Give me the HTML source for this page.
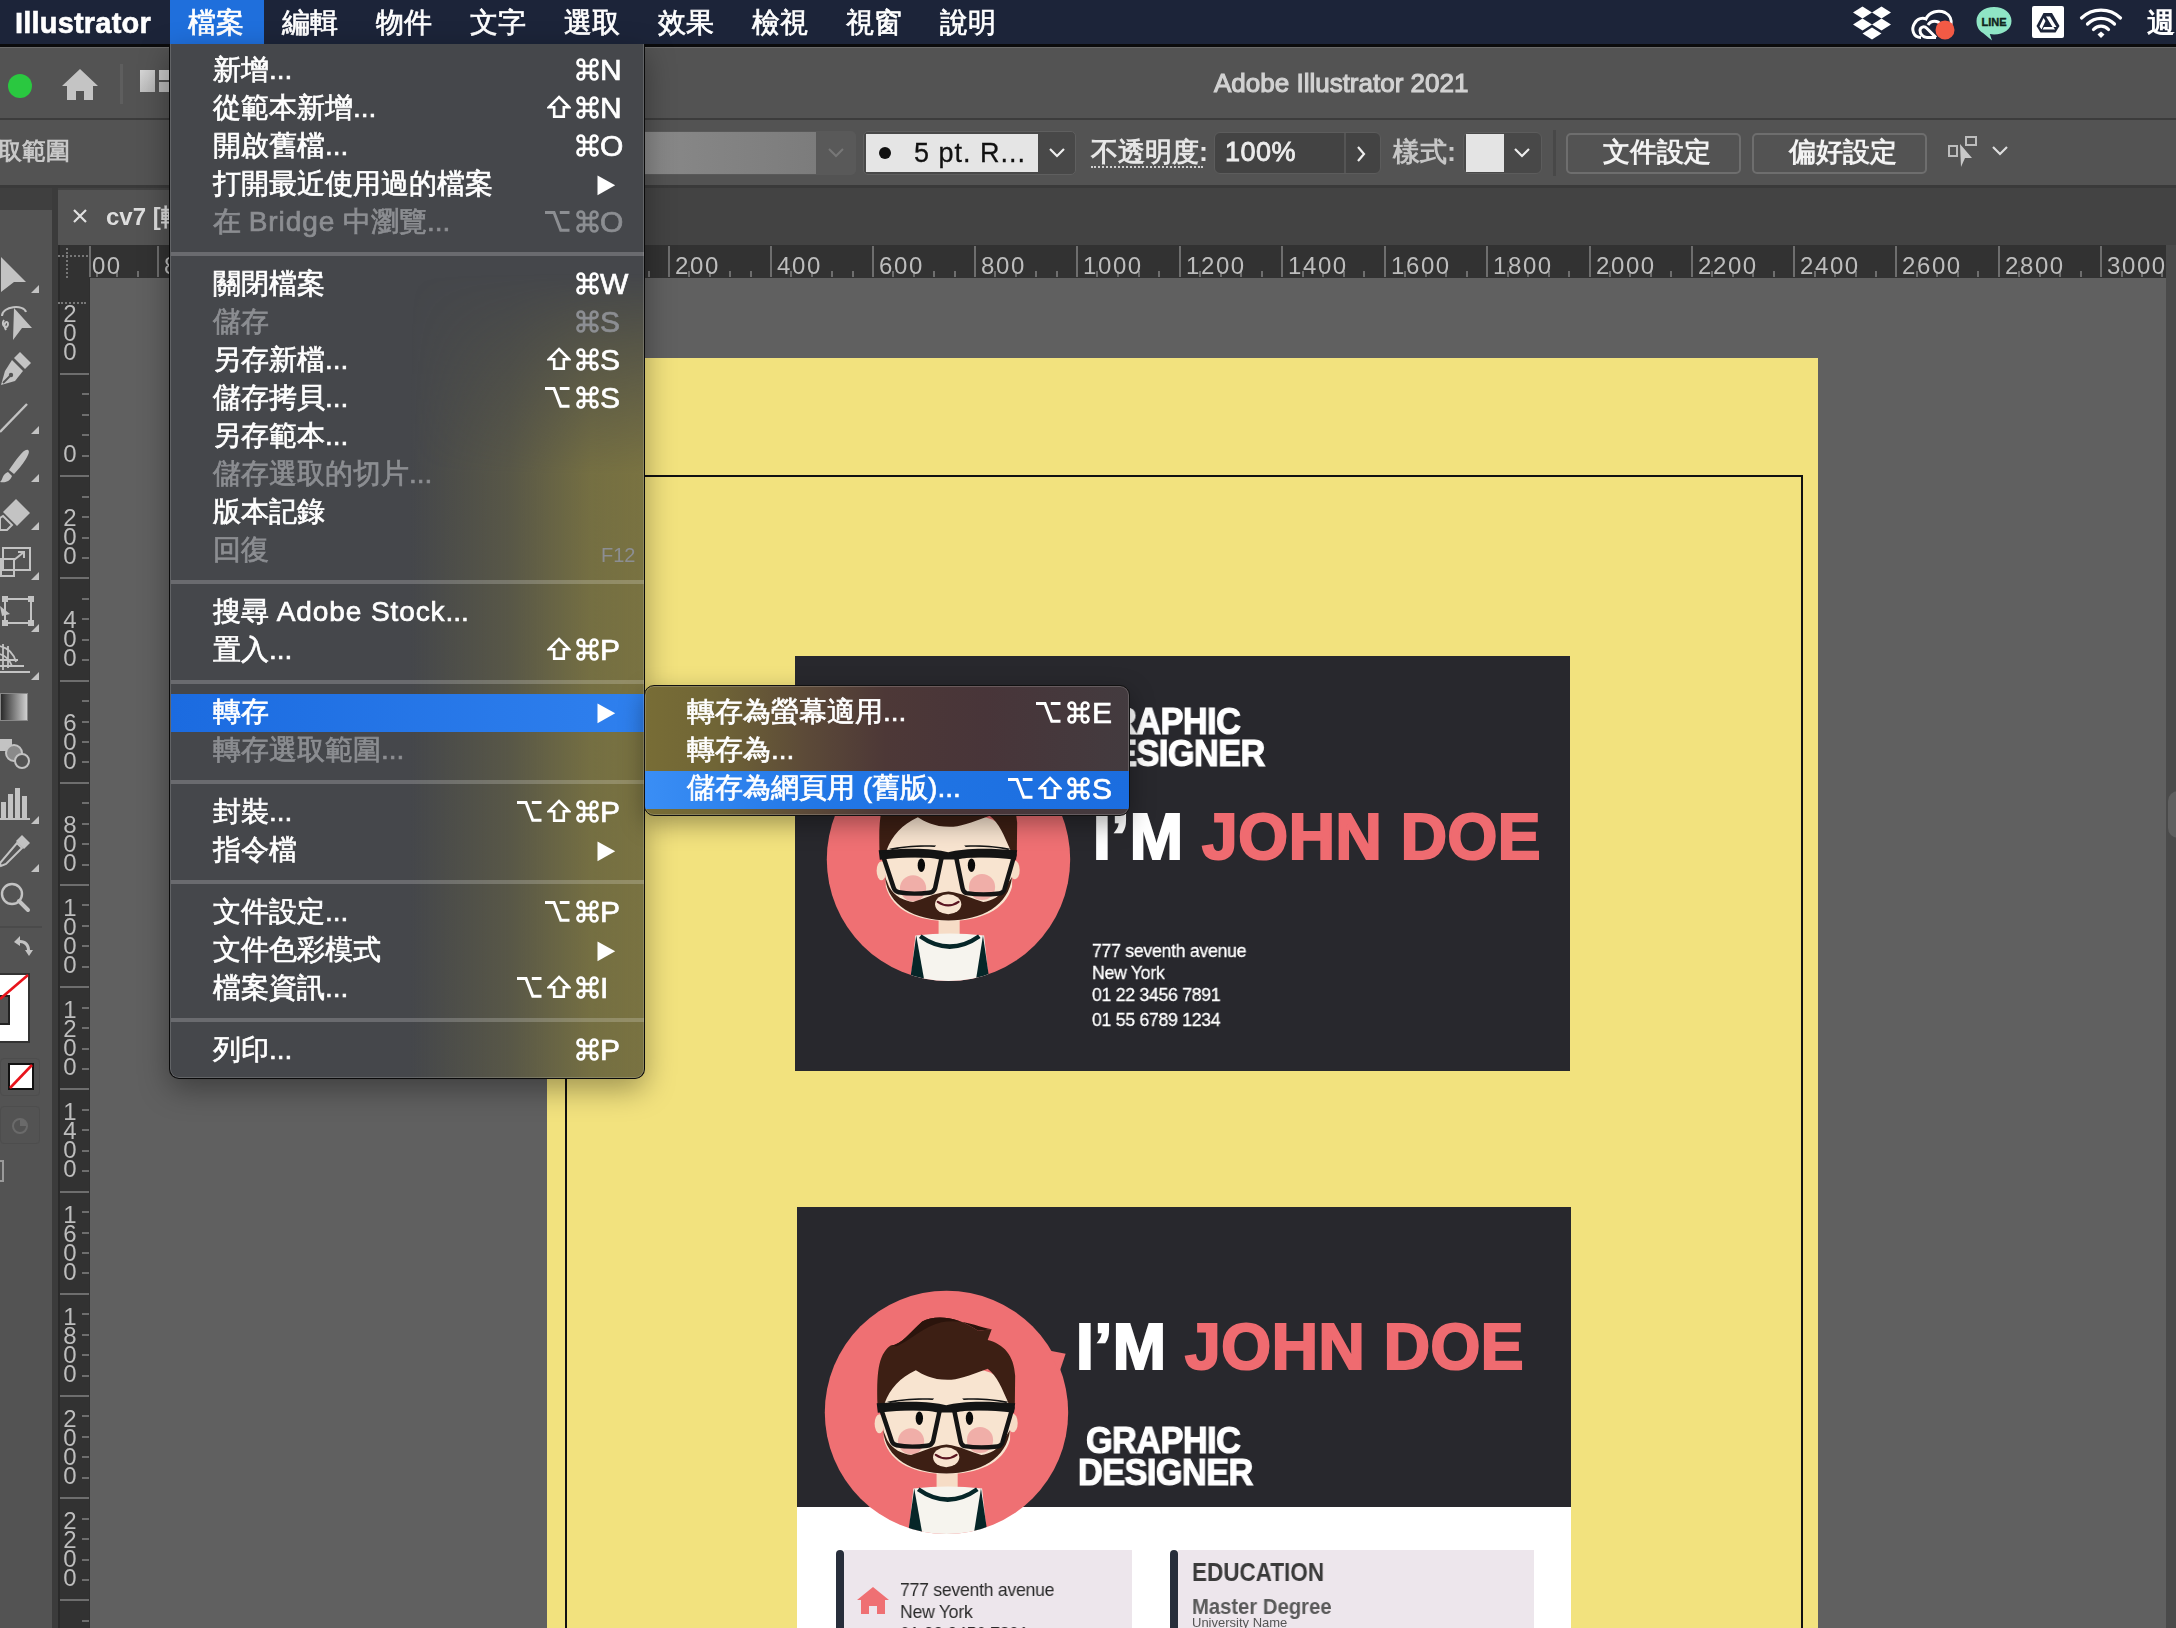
<!DOCTYPE html>
<html><head><meta charset="utf-8"><style>
*{margin:0;padding:0;box-sizing:border-box}
html,body{width:2176px;height:1628px;overflow:hidden;background:#606060;font-family:'Liberation Sans', sans-serif;}
.a{position:absolute}
.t{position:absolute;white-space:nowrap;line-height:1;will-change:transform}
.s{-webkit-text-stroke:0.7px currentColor}
.L{letter-spacing:0.9px}
</style></head>
<body>
<div class="a" style="left:0;top:0;width:2176px;height:44px;background:#1c2439"></div>
<div class="a" style="left:0;top:44px;width:2176px;height:3px;background:#0b0b0c"></div>
<div class="a" style="left:170px;top:0;width:94px;height:44px;background:#1f6fdc"></div>
<div class="t" style="left:15px;top:9px;font-size:29px;font-weight:bold;color:#fff;-webkit-text-stroke:0.6px #fff;letter-spacing:0.2px">Illustrator</div>
<div class="t s" style="left:188px;top:9px;font-size:28px;font-weight:500;color:#fff">檔案</div>
<div class="t s" style="left:282px;top:9px;font-size:28px;font-weight:500;color:#fff">編輯</div>
<div class="t s" style="left:376px;top:9px;font-size:28px;font-weight:500;color:#fff">物件</div>
<div class="t s" style="left:470px;top:9px;font-size:28px;font-weight:500;color:#fff">文字</div>
<div class="t s" style="left:564px;top:9px;font-size:28px;font-weight:500;color:#fff">選取</div>
<div class="t s" style="left:658px;top:9px;font-size:28px;font-weight:500;color:#fff">效果</div>
<div class="t s" style="left:752px;top:9px;font-size:28px;font-weight:500;color:#fff">檢視</div>
<div class="t s" style="left:846px;top:9px;font-size:28px;font-weight:500;color:#fff">視窗</div>
<div class="t s" style="left:940px;top:9px;font-size:28px;font-weight:500;color:#fff">說明</div>
<div class="a" style="left:0;top:47px;width:2176px;height:71px;background:#535353;border-top:1px solid #6a6a6a"></div>
<div class="a" style="left:0;top:118px;width:2176px;height:2px;background:#3c3c3c"></div>
<div class="a" style="left:8px;top:74px;width:24px;height:24px;border-radius:50%;background:#2ac840"></div>
<div class="t" style="left:1214px;top:70px;font-size:26px;font-weight:500;color:#d2d2d2;-webkit-text-stroke:1.1px #d2d2d2">Adobe Illustrator 2021</div>
<div class="a" style="left:0;top:120px;width:2176px;height:66px;background:#535353"></div>
<div class="a" style="left:0;top:185px;width:2176px;height:3px;background:#3a3a3a"></div>
<div class="t" style="left:-2px;top:139px;font-size:24px;font-weight:bold;color:#c8c8c8">取範圍</div>
<div class="a" style="left:0;top:188px;width:2176px;height:57px;background:#434343"></div>
<div class="a" style="left:0;top:188px;width:52px;height:1440px;background:#535353"></div>
<div class="a" style="left:0;top:188px;width:52px;height:22px;background:#3f3f3f"></div>
<div class="a" style="left:52px;top:188px;width:6px;height:1440px;background:#3b3b3b"></div>
<div class="a" style="left:58px;top:190px;width:580px;height:55px;background:#535353"></div>
<div class="a" style="left:58px;top:245px;width:2108px;height:33px;background:#323232"></div>
<div class="a" style="left:58px;top:245px;width:32px;height:1383px;background:#323232"></div>
<div class="a" style="left:2166px;top:245px;width:10px;height:1383px;background:#4a4a4a"></div>
<div class="a" style="left:2168px;top:791px;width:20px;height:47px;border-radius:10px;background:#5f5f5f"></div>
<div class="a" style="left:547px;top:358px;width:1271px;height:1270px;background:#f2e27e"></div>
<div class="a" style="left:565px;top:475px;width:1238px;height:1200px;border:2px solid #111"></div>
<div class="a" style="left:795px;top:656px;width:775px;height:415px;background:#28282d"></div>
<div class="a" style="left:797px;top:1207px;width:774px;height:300px;background:#28282d"></div>
<div class="a" style="left:797px;top:1507px;width:774px;height:121px;background:#fff"></div>
<div class="a" style="left:95.7px;top:271px;width:2px;height:6px;background:#6e6e6e"></div>
<div class="a" style="left:116.1px;top:271px;width:2px;height:6px;background:#6e6e6e"></div>
<div class="a" style="left:136.6px;top:271px;width:2px;height:6px;background:#6e6e6e"></div>
<div class="t" style="left:61.799999999999955px;top:254px;font-size:24px;color:#bdbdbd;letter-spacing:1.6px">1000</div>
<div class="a" style="left:157.0px;top:246px;width:2px;height:31px;background:#6e6e6e"></div>
<div class="a" style="left:177.4px;top:271px;width:2px;height:6px;background:#6e6e6e"></div>
<div class="a" style="left:197.9px;top:271px;width:2px;height:6px;background:#6e6e6e"></div>
<div class="a" style="left:218.3px;top:271px;width:2px;height:6px;background:#6e6e6e"></div>
<div class="a" style="left:238.8px;top:271px;width:2px;height:6px;background:#6e6e6e"></div>
<div class="t" style="left:164.0px;top:254px;font-size:24px;color:#bdbdbd;letter-spacing:1.6px">800</div>
<div class="a" style="left:259.2px;top:246px;width:2px;height:31px;background:#6e6e6e"></div>
<div class="a" style="left:279.6px;top:271px;width:2px;height:6px;background:#6e6e6e"></div>
<div class="a" style="left:300.1px;top:271px;width:2px;height:6px;background:#6e6e6e"></div>
<div class="a" style="left:320.5px;top:271px;width:2px;height:6px;background:#6e6e6e"></div>
<div class="a" style="left:341.0px;top:271px;width:2px;height:6px;background:#6e6e6e"></div>
<div class="t" style="left:266.2px;top:254px;font-size:24px;color:#bdbdbd;letter-spacing:1.6px">600</div>
<div class="a" style="left:361.4px;top:246px;width:2px;height:31px;background:#6e6e6e"></div>
<div class="a" style="left:381.8px;top:271px;width:2px;height:6px;background:#6e6e6e"></div>
<div class="a" style="left:402.3px;top:271px;width:2px;height:6px;background:#6e6e6e"></div>
<div class="a" style="left:422.7px;top:271px;width:2px;height:6px;background:#6e6e6e"></div>
<div class="a" style="left:443.2px;top:271px;width:2px;height:6px;background:#6e6e6e"></div>
<div class="t" style="left:368.4px;top:254px;font-size:24px;color:#bdbdbd;letter-spacing:1.6px">400</div>
<div class="a" style="left:463.6px;top:246px;width:2px;height:31px;background:#6e6e6e"></div>
<div class="a" style="left:484.0px;top:271px;width:2px;height:6px;background:#6e6e6e"></div>
<div class="a" style="left:504.5px;top:271px;width:2px;height:6px;background:#6e6e6e"></div>
<div class="a" style="left:524.9px;top:271px;width:2px;height:6px;background:#6e6e6e"></div>
<div class="a" style="left:545.4px;top:271px;width:2px;height:6px;background:#6e6e6e"></div>
<div class="t" style="left:470.6px;top:254px;font-size:24px;color:#bdbdbd;letter-spacing:1.6px">200</div>
<div class="a" style="left:565.8px;top:246px;width:2px;height:31px;background:#6e6e6e"></div>
<div class="a" style="left:586.2px;top:271px;width:2px;height:6px;background:#6e6e6e"></div>
<div class="a" style="left:606.7px;top:271px;width:2px;height:6px;background:#6e6e6e"></div>
<div class="a" style="left:627.1px;top:271px;width:2px;height:6px;background:#6e6e6e"></div>
<div class="a" style="left:647.6px;top:271px;width:2px;height:6px;background:#6e6e6e"></div>
<div class="t" style="left:572.8px;top:254px;font-size:24px;color:#bdbdbd;letter-spacing:1.6px">0</div>
<div class="a" style="left:668.0px;top:246px;width:2px;height:31px;background:#6e6e6e"></div>
<div class="a" style="left:688.4px;top:271px;width:2px;height:6px;background:#6e6e6e"></div>
<div class="a" style="left:708.8px;top:271px;width:2px;height:6px;background:#6e6e6e"></div>
<div class="a" style="left:729.2px;top:271px;width:2px;height:6px;background:#6e6e6e"></div>
<div class="a" style="left:749.6px;top:271px;width:2px;height:6px;background:#6e6e6e"></div>
<div class="t" style="left:675.0px;top:254px;font-size:24px;color:#bdbdbd;letter-spacing:1.6px">200</div>
<div class="a" style="left:770.0px;top:246px;width:2px;height:31px;background:#6e6e6e"></div>
<div class="a" style="left:790.4px;top:271px;width:2px;height:6px;background:#6e6e6e"></div>
<div class="a" style="left:810.8px;top:271px;width:2px;height:6px;background:#6e6e6e"></div>
<div class="a" style="left:831.2px;top:271px;width:2px;height:6px;background:#6e6e6e"></div>
<div class="a" style="left:851.6px;top:271px;width:2px;height:6px;background:#6e6e6e"></div>
<div class="t" style="left:776.975px;top:254px;font-size:24px;color:#bdbdbd;letter-spacing:1.6px">400</div>
<div class="a" style="left:872.0px;top:246px;width:2px;height:31px;background:#6e6e6e"></div>
<div class="a" style="left:892.3px;top:271px;width:2px;height:6px;background:#6e6e6e"></div>
<div class="a" style="left:912.7px;top:271px;width:2px;height:6px;background:#6e6e6e"></div>
<div class="a" style="left:933.1px;top:271px;width:2px;height:6px;background:#6e6e6e"></div>
<div class="a" style="left:953.5px;top:271px;width:2px;height:6px;background:#6e6e6e"></div>
<div class="t" style="left:878.95px;top:254px;font-size:24px;color:#bdbdbd;letter-spacing:1.6px">600</div>
<div class="a" style="left:973.9px;top:246px;width:2px;height:31px;background:#6e6e6e"></div>
<div class="a" style="left:994.3px;top:271px;width:2px;height:6px;background:#6e6e6e"></div>
<div class="a" style="left:1014.7px;top:271px;width:2px;height:6px;background:#6e6e6e"></div>
<div class="a" style="left:1035.1px;top:271px;width:2px;height:6px;background:#6e6e6e"></div>
<div class="a" style="left:1055.5px;top:271px;width:2px;height:6px;background:#6e6e6e"></div>
<div class="t" style="left:980.9250000000001px;top:254px;font-size:24px;color:#bdbdbd;letter-spacing:1.6px">800</div>
<div class="a" style="left:1075.9px;top:246px;width:2px;height:31px;background:#6e6e6e"></div>
<div class="a" style="left:1096.4px;top:271px;width:2px;height:6px;background:#6e6e6e"></div>
<div class="a" style="left:1117.0px;top:271px;width:2px;height:6px;background:#6e6e6e"></div>
<div class="a" style="left:1137.5px;top:271px;width:2px;height:6px;background:#6e6e6e"></div>
<div class="a" style="left:1158.0px;top:271px;width:2px;height:6px;background:#6e6e6e"></div>
<div class="t" style="left:1082.9px;top:254px;font-size:24px;color:#bdbdbd;letter-spacing:1.6px">1000</div>
<div class="a" style="left:1178.6px;top:246px;width:2px;height:31px;background:#6e6e6e"></div>
<div class="a" style="left:1199.1px;top:271px;width:2px;height:6px;background:#6e6e6e"></div>
<div class="a" style="left:1219.6px;top:271px;width:2px;height:6px;background:#6e6e6e"></div>
<div class="a" style="left:1240.2px;top:271px;width:2px;height:6px;background:#6e6e6e"></div>
<div class="a" style="left:1260.7px;top:271px;width:2px;height:6px;background:#6e6e6e"></div>
<div class="t" style="left:1185.5666666666668px;top:254px;font-size:24px;color:#bdbdbd;letter-spacing:1.6px">1200</div>
<div class="a" style="left:1281.2px;top:246px;width:2px;height:31px;background:#6e6e6e"></div>
<div class="a" style="left:1301.8px;top:271px;width:2px;height:6px;background:#6e6e6e"></div>
<div class="a" style="left:1322.3px;top:271px;width:2px;height:6px;background:#6e6e6e"></div>
<div class="a" style="left:1342.8px;top:271px;width:2px;height:6px;background:#6e6e6e"></div>
<div class="a" style="left:1363.4px;top:271px;width:2px;height:6px;background:#6e6e6e"></div>
<div class="t" style="left:1288.2333333333333px;top:254px;font-size:24px;color:#bdbdbd;letter-spacing:1.6px">1400</div>
<div class="a" style="left:1383.9px;top:246px;width:2px;height:31px;background:#6e6e6e"></div>
<div class="a" style="left:1404.4px;top:271px;width:2px;height:6px;background:#6e6e6e"></div>
<div class="a" style="left:1424.8px;top:271px;width:2px;height:6px;background:#6e6e6e"></div>
<div class="a" style="left:1445.3px;top:271px;width:2px;height:6px;background:#6e6e6e"></div>
<div class="a" style="left:1465.7px;top:271px;width:2px;height:6px;background:#6e6e6e"></div>
<div class="t" style="left:1390.9px;top:254px;font-size:24px;color:#bdbdbd;letter-spacing:1.6px">1600</div>
<div class="a" style="left:1486.2px;top:246px;width:2px;height:31px;background:#6e6e6e"></div>
<div class="a" style="left:1506.7px;top:271px;width:2px;height:6px;background:#6e6e6e"></div>
<div class="a" style="left:1527.1px;top:271px;width:2px;height:6px;background:#6e6e6e"></div>
<div class="a" style="left:1547.6px;top:271px;width:2px;height:6px;background:#6e6e6e"></div>
<div class="a" style="left:1568.0px;top:271px;width:2px;height:6px;background:#6e6e6e"></div>
<div class="t" style="left:1493.2px;top:254px;font-size:24px;color:#bdbdbd;letter-spacing:1.6px">1800</div>
<div class="a" style="left:1588.5px;top:246px;width:2px;height:31px;background:#6e6e6e"></div>
<div class="a" style="left:1609.0px;top:271px;width:2px;height:6px;background:#6e6e6e"></div>
<div class="a" style="left:1629.4px;top:271px;width:2px;height:6px;background:#6e6e6e"></div>
<div class="a" style="left:1649.9px;top:271px;width:2px;height:6px;background:#6e6e6e"></div>
<div class="a" style="left:1670.3px;top:271px;width:2px;height:6px;background:#6e6e6e"></div>
<div class="t" style="left:1595.5px;top:254px;font-size:24px;color:#bdbdbd;letter-spacing:1.6px">2000</div>
<div class="a" style="left:1690.8px;top:246px;width:2px;height:31px;background:#6e6e6e"></div>
<div class="a" style="left:1711.3px;top:271px;width:2px;height:6px;background:#6e6e6e"></div>
<div class="a" style="left:1731.7px;top:271px;width:2px;height:6px;background:#6e6e6e"></div>
<div class="a" style="left:1752.2px;top:271px;width:2px;height:6px;background:#6e6e6e"></div>
<div class="a" style="left:1772.6px;top:271px;width:2px;height:6px;background:#6e6e6e"></div>
<div class="t" style="left:1697.8000000000002px;top:254px;font-size:24px;color:#bdbdbd;letter-spacing:1.6px">2200</div>
<div class="a" style="left:1793.1px;top:246px;width:2px;height:31px;background:#6e6e6e"></div>
<div class="a" style="left:1813.6px;top:271px;width:2px;height:6px;background:#6e6e6e"></div>
<div class="a" style="left:1834.0px;top:271px;width:2px;height:6px;background:#6e6e6e"></div>
<div class="a" style="left:1854.5px;top:271px;width:2px;height:6px;background:#6e6e6e"></div>
<div class="a" style="left:1874.9px;top:271px;width:2px;height:6px;background:#6e6e6e"></div>
<div class="t" style="left:1800.1000000000001px;top:254px;font-size:24px;color:#bdbdbd;letter-spacing:1.6px">2400</div>
<div class="a" style="left:1895.4px;top:246px;width:2px;height:31px;background:#6e6e6e"></div>
<div class="a" style="left:1915.9px;top:271px;width:2px;height:6px;background:#6e6e6e"></div>
<div class="a" style="left:1936.3px;top:271px;width:2px;height:6px;background:#6e6e6e"></div>
<div class="a" style="left:1956.8px;top:271px;width:2px;height:6px;background:#6e6e6e"></div>
<div class="a" style="left:1977.2px;top:271px;width:2px;height:6px;background:#6e6e6e"></div>
<div class="t" style="left:1902.4px;top:254px;font-size:24px;color:#bdbdbd;letter-spacing:1.6px">2600</div>
<div class="a" style="left:1997.7px;top:246px;width:2px;height:31px;background:#6e6e6e"></div>
<div class="a" style="left:2018.2px;top:271px;width:2px;height:6px;background:#6e6e6e"></div>
<div class="a" style="left:2038.6px;top:271px;width:2px;height:6px;background:#6e6e6e"></div>
<div class="a" style="left:2059.1px;top:271px;width:2px;height:6px;background:#6e6e6e"></div>
<div class="a" style="left:2079.5px;top:271px;width:2px;height:6px;background:#6e6e6e"></div>
<div class="t" style="left:2004.7px;top:254px;font-size:24px;color:#bdbdbd;letter-spacing:1.6px">2800</div>
<div class="a" style="left:2100.0px;top:246px;width:2px;height:31px;background:#6e6e6e"></div>
<div class="a" style="left:2120.5px;top:271px;width:2px;height:6px;background:#6e6e6e"></div>
<div class="a" style="left:2140.9px;top:271px;width:2px;height:6px;background:#6e6e6e"></div>
<div class="a" style="left:2161.4px;top:271px;width:2px;height:6px;background:#6e6e6e"></div>
<div class="t" style="left:2107.0px;top:254px;font-size:24px;color:#bdbdbd;letter-spacing:1.6px">3000</div>
<div class="a" style="left:58px;top:373.0px;width:31px;height:2px;background:#6e6e6e"></div>
<div class="a" style="left:82px;top:393.4px;width:7px;height:2px;background:#6e6e6e"></div>
<div class="a" style="left:82px;top:413.9px;width:7px;height:2px;background:#6e6e6e"></div>
<div class="a" style="left:82px;top:434.3px;width:7px;height:2px;background:#6e6e6e"></div>
<div class="a" style="left:82px;top:454.8px;width:7px;height:2px;background:#6e6e6e"></div>
<div class="a" style="left:58px;top:475.2px;width:31px;height:2px;background:#6e6e6e"></div>
<div class="a" style="left:82px;top:495.6px;width:7px;height:2px;background:#6e6e6e"></div>
<div class="a" style="left:82px;top:516.1px;width:7px;height:2px;background:#6e6e6e"></div>
<div class="a" style="left:82px;top:536.5px;width:7px;height:2px;background:#6e6e6e"></div>
<div class="a" style="left:82px;top:557.0px;width:7px;height:2px;background:#6e6e6e"></div>
<div class="a" style="left:58px;top:577.4px;width:31px;height:2px;background:#6e6e6e"></div>
<div class="a" style="left:82px;top:597.8px;width:7px;height:2px;background:#6e6e6e"></div>
<div class="a" style="left:82px;top:618.3px;width:7px;height:2px;background:#6e6e6e"></div>
<div class="a" style="left:82px;top:638.7px;width:7px;height:2px;background:#6e6e6e"></div>
<div class="a" style="left:82px;top:659.2px;width:7px;height:2px;background:#6e6e6e"></div>
<div class="a" style="left:58px;top:679.6px;width:31px;height:2px;background:#6e6e6e"></div>
<div class="a" style="left:82px;top:700.0px;width:7px;height:2px;background:#6e6e6e"></div>
<div class="a" style="left:82px;top:720.5px;width:7px;height:2px;background:#6e6e6e"></div>
<div class="a" style="left:82px;top:740.9px;width:7px;height:2px;background:#6e6e6e"></div>
<div class="a" style="left:82px;top:761.4px;width:7px;height:2px;background:#6e6e6e"></div>
<div class="a" style="left:58px;top:781.8px;width:31px;height:2px;background:#6e6e6e"></div>
<div class="a" style="left:82px;top:802.2px;width:7px;height:2px;background:#6e6e6e"></div>
<div class="a" style="left:82px;top:822.7px;width:7px;height:2px;background:#6e6e6e"></div>
<div class="a" style="left:82px;top:843.1px;width:7px;height:2px;background:#6e6e6e"></div>
<div class="a" style="left:82px;top:863.6px;width:7px;height:2px;background:#6e6e6e"></div>
<div class="a" style="left:58px;top:884.0px;width:31px;height:2px;background:#6e6e6e"></div>
<div class="a" style="left:82px;top:904.4px;width:7px;height:2px;background:#6e6e6e"></div>
<div class="a" style="left:82px;top:924.9px;width:7px;height:2px;background:#6e6e6e"></div>
<div class="a" style="left:82px;top:945.3px;width:7px;height:2px;background:#6e6e6e"></div>
<div class="a" style="left:82px;top:965.8px;width:7px;height:2px;background:#6e6e6e"></div>
<div class="a" style="left:58px;top:986.2px;width:31px;height:2px;background:#6e6e6e"></div>
<div class="a" style="left:82px;top:1006.6px;width:7px;height:2px;background:#6e6e6e"></div>
<div class="a" style="left:82px;top:1027.1px;width:7px;height:2px;background:#6e6e6e"></div>
<div class="a" style="left:82px;top:1047.5px;width:7px;height:2px;background:#6e6e6e"></div>
<div class="a" style="left:82px;top:1068.0px;width:7px;height:2px;background:#6e6e6e"></div>
<div class="a" style="left:58px;top:1088.4px;width:31px;height:2px;background:#6e6e6e"></div>
<div class="a" style="left:82px;top:1108.8px;width:7px;height:2px;background:#6e6e6e"></div>
<div class="a" style="left:82px;top:1129.3px;width:7px;height:2px;background:#6e6e6e"></div>
<div class="a" style="left:82px;top:1149.7px;width:7px;height:2px;background:#6e6e6e"></div>
<div class="a" style="left:82px;top:1170.2px;width:7px;height:2px;background:#6e6e6e"></div>
<div class="a" style="left:58px;top:1190.6px;width:31px;height:2px;background:#6e6e6e"></div>
<div class="a" style="left:82px;top:1211.0px;width:7px;height:2px;background:#6e6e6e"></div>
<div class="a" style="left:82px;top:1231.5px;width:7px;height:2px;background:#6e6e6e"></div>
<div class="a" style="left:82px;top:1251.9px;width:7px;height:2px;background:#6e6e6e"></div>
<div class="a" style="left:82px;top:1272.4px;width:7px;height:2px;background:#6e6e6e"></div>
<div class="a" style="left:58px;top:1292.8px;width:31px;height:2px;background:#6e6e6e"></div>
<div class="a" style="left:82px;top:1313.2px;width:7px;height:2px;background:#6e6e6e"></div>
<div class="a" style="left:82px;top:1333.7px;width:7px;height:2px;background:#6e6e6e"></div>
<div class="a" style="left:82px;top:1354.1px;width:7px;height:2px;background:#6e6e6e"></div>
<div class="a" style="left:82px;top:1374.6px;width:7px;height:2px;background:#6e6e6e"></div>
<div class="a" style="left:58px;top:1395.0px;width:31px;height:2px;background:#6e6e6e"></div>
<div class="a" style="left:82px;top:1415.4px;width:7px;height:2px;background:#6e6e6e"></div>
<div class="a" style="left:82px;top:1435.9px;width:7px;height:2px;background:#6e6e6e"></div>
<div class="a" style="left:82px;top:1456.3px;width:7px;height:2px;background:#6e6e6e"></div>
<div class="a" style="left:82px;top:1476.8px;width:7px;height:2px;background:#6e6e6e"></div>
<div class="a" style="left:58px;top:1497.2px;width:31px;height:2px;background:#6e6e6e"></div>
<div class="a" style="left:82px;top:1517.6px;width:7px;height:2px;background:#6e6e6e"></div>
<div class="a" style="left:82px;top:1538.1px;width:7px;height:2px;background:#6e6e6e"></div>
<div class="a" style="left:82px;top:1558.5px;width:7px;height:2px;background:#6e6e6e"></div>
<div class="a" style="left:82px;top:1579.0px;width:7px;height:2px;background:#6e6e6e"></div>
<div class="a" style="left:58px;top:1599.4px;width:31px;height:2px;background:#6e6e6e"></div>
<div class="a" style="left:82px;top:1619.8px;width:7px;height:2px;background:#6e6e6e"></div>
<div class="a" style="left:82px;top:1640.3px;width:7px;height:2px;background:#6e6e6e"></div>
<div class="a" style="left:82px;top:1660.7px;width:7px;height:2px;background:#6e6e6e"></div>
<div class="a" style="left:82px;top:1681.2px;width:7px;height:2px;background:#6e6e6e"></div>
<div class="a" style="left:58px;top:1701.6px;width:31px;height:2px;background:#6e6e6e"></div>
<div class="a" style="left:82px;top:1722.0px;width:7px;height:2px;background:#6e6e6e"></div>
<div class="a" style="left:82px;top:1742.5px;width:7px;height:2px;background:#6e6e6e"></div>
<div class="a" style="left:82px;top:1762.9px;width:7px;height:2px;background:#6e6e6e"></div>
<div class="a" style="left:82px;top:1783.4px;width:7px;height:2px;background:#6e6e6e"></div>
<div class="t" style="left:62px;top:303.8px;font-size:24px;line-height:19px;color:#bdbdbd;width:16px;text-align:center">2<br>0<br>0</div>
<div class="t" style="left:62px;top:444.0px;font-size:24px;line-height:19px;color:#bdbdbd;width:16px;text-align:center">0</div>
<div class="t" style="left:62px;top:508.2px;font-size:24px;line-height:19px;color:#bdbdbd;width:16px;text-align:center">2<br>0<br>0</div>
<div class="t" style="left:62px;top:610.4px;font-size:24px;line-height:19px;color:#bdbdbd;width:16px;text-align:center">4<br>0<br>0</div>
<div class="t" style="left:62px;top:712.6px;font-size:24px;line-height:19px;color:#bdbdbd;width:16px;text-align:center">6<br>0<br>0</div>
<div class="t" style="left:62px;top:814.8px;font-size:24px;line-height:19px;color:#bdbdbd;width:16px;text-align:center">8<br>0<br>0</div>
<div class="t" style="left:62px;top:898.0px;font-size:24px;line-height:19px;color:#bdbdbd;width:16px;text-align:center">1<br>0<br>0<br>0</div>
<div class="t" style="left:62px;top:1000.2px;font-size:24px;line-height:19px;color:#bdbdbd;width:16px;text-align:center">1<br>2<br>0<br>0</div>
<div class="t" style="left:62px;top:1102.4px;font-size:24px;line-height:19px;color:#bdbdbd;width:16px;text-align:center">1<br>4<br>0<br>0</div>
<div class="t" style="left:62px;top:1204.6px;font-size:24px;line-height:19px;color:#bdbdbd;width:16px;text-align:center">1<br>6<br>0<br>0</div>
<div class="t" style="left:62px;top:1306.8px;font-size:24px;line-height:19px;color:#bdbdbd;width:16px;text-align:center">1<br>8<br>0<br>0</div>
<div class="t" style="left:62px;top:1409.0px;font-size:24px;line-height:19px;color:#bdbdbd;width:16px;text-align:center">2<br>0<br>0<br>0</div>
<div class="t" style="left:62px;top:1511.2px;font-size:24px;line-height:19px;color:#bdbdbd;width:16px;text-align:center">2<br>2<br>0<br>0</div>
<div class="a" style="left:58px;top:245px;width:31px;height:33px;background:#323232"></div>
<div class="a" style="left:89px;top:246px;width:2px;height:31px;background:#6e6e6e"></div>
<div class="a" style="left:58px;top:245px;width:2px;height:1383px;background:#2a2a2a"></div>
<div class="a" style="left:89px;top:278px;width:1px;height:1350px;background:#2f2f2f"></div>
<div class="a" style="left:66px;top:248px;width:0;height:30px;border-left:2px dotted #777"></div>
<div class="a" style="left:58px;top:255px;width:30px;height:0;border-top:2px dotted #777"></div>
<div class="a" style="left:58px;top:302px;width:28px;height:0;border-top:2px dotted #777"></div>
<svg class="a" style="left:822px;top:727px" width="260" height="260" viewBox="0 0 1628 1628">
<defs><clipPath id="cc727"><circle cx="792" cy="829" r="762"/></clipPath></defs>
<circle cx="792" cy="829" r="762" fill="#ef7073"/>

<g clip-path="url(#cc727)">
<path d="M730 1180 H862 V1330 H730 Z" fill="#f6dcc6"/>
<path d="M585 1305 Q800 1280 1015 1305 L1050 1640 L550 1640 Z" fill="#f6f4ee"/>
<path d="M590 1305 L555 1560 L560 1640 L650 1640 Z" fill="#062628"/>
<path d="M1008 1305 L1045 1560 L1040 1640 L955 1640 Z" fill="#062628"/>
<path d="M615 1310 Q800 1440 985 1310" fill="none" stroke="#062628" stroke-width="28"/>
</g>
<ellipse cx="372" cy="900" rx="30" ry="60" fill="#f6dcc6"/>
<ellipse cx="1208" cy="895" rx="30" ry="58" fill="#f6dcc6"/>
<path d="M390 760 C390 600 560 540 800 540 C1040 540 1195 600 1195 760 L1190 1000 C1150 1150 980 1215 792 1215 C600 1215 440 1150 400 1000 Z" fill="#f8e4d0"/>
<circle cx="570" cy="1010" r="82" fill="#f0aea8"/>
<circle cx="1002" cy="1002" r="82" fill="#f0aea8"/>
<path d="M360 780 C355 600 360 470 440 412 C520 400 560 330 640 260 C720 215 860 225 990 318 L1075 308 L1050 375 C1150 400 1215 470 1222 600 L1220 780 L1180 770 C1140 680 1110 600 1050 555 C930 600 860 625 800 625 C700 625 640 590 600 565 C500 610 440 680 405 770 Z" fill="#3d1f14"/>
<path d="M440 412 C520 400 560 330 640 260 C720 215 860 225 990 318 L1075 308 C1000 300 900 240 760 265 C650 290 580 370 480 415 Z" fill="#2b140c"/>
<path d="M395 940 C410 1120 580 1210 792 1212 C1000 1210 1170 1120 1190 940 L1150 1000 C1120 1060 1060 1090 1010 1095 C950 1080 880 1040 792 1030 C700 1040 630 1080 570 1095 C520 1090 450 1060 420 1000 Z" fill="#3d1f14"/>
<ellipse cx="790" cy="1110" rx="82" ry="62" fill="#f8e4d0"/>
<path d="M725 1095 Q790 1140 855 1095" fill="none" stroke="#5a1420" stroke-width="14" stroke-linecap="round"/>
<path d="M420 762 C500 745 620 735 715 742 L705 752 C620 748 520 752 440 770 Z" fill="#141414"/>
<path d="M890 742 C990 735 1100 745 1180 762 L1165 770 C1080 752 990 748 900 752 Z" fill="#141414"/>
<path d="M355 772 C560 755 700 760 790 785 C880 760 1020 755 1222 772 L1215 832 C1060 810 920 810 850 830 L735 830 C660 810 520 810 362 832 Z" fill="#141414"/>
<path d="M380 800 L752 805 L708 1010 Q700 1035 670 1038 Q560 1050 480 1035 Q455 1030 448 1005 Z" fill="none" stroke="#141414" stroke-width="28" stroke-linejoin="round"/>
<path d="M838 805 L1205 800 L1142 1018 Q1135 1040 1110 1042 Q1000 1055 905 1040 Q885 1035 880 1010 Z" fill="none" stroke="#141414" stroke-width="28" stroke-linejoin="round"/>
<ellipse cx="622" cy="866" rx="23" ry="42" fill="#0a0a0a"/>
<ellipse cx="936" cy="866" rx="23" ry="42" fill="#0a0a0a"/>
</svg>
<div class="t" style="left:1086px;top:704px;font-size:36px;font-weight:bold;color:#fff;-webkit-text-stroke:1.2px currentColor;transform:scaleX(.95);transform-origin:left top;letter-spacing:-0.5px">GRAPHIC</div>
<div class="t" style="left:1090px;top:736px;font-size:36px;font-weight:bold;color:#fff;-webkit-text-stroke:1.2px currentColor;transform:scaleX(.95);transform-origin:left top;letter-spacing:-0.5px">DESIGNER</div>
<div class="t" style="left:1093px;top:805px;font-size:64px;font-weight:bold;color:#fff;-webkit-text-stroke:2.2px currentColor;letter-spacing:0.6px">I’M <span style="color:#ef6b70">JOHN DOE</span></div>
<div class="t" style="left:1092px;top:941px;font-size:19px;font-weight:normal;color:#fff;letter-spacing:-0.3px;transform:scaleX(.93);transform-origin:left top;-webkit-text-stroke:0.3px #fff">777 seventh avenue</div>
<div class="t" style="left:1092px;top:963px;font-size:19px;font-weight:normal;color:#fff;letter-spacing:-0.3px;transform:scaleX(.93);transform-origin:left top;-webkit-text-stroke:0.3px #fff">New York</div>
<div class="t" style="left:1092px;top:985px;font-size:19px;font-weight:normal;color:#fff;letter-spacing:-0.3px;transform:scaleX(.93);transform-origin:left top;-webkit-text-stroke:0.3px #fff">01 22 3456 7891</div>
<div class="t" style="left:1092px;top:1010px;font-size:19px;font-weight:normal;color:#fff;letter-spacing:-0.3px;transform:scaleX(.93);transform-origin:left top;-webkit-text-stroke:0.3px #fff">01 55 6789 1234</div>
<svg class="a" style="left:820px;top:1280px" width="260" height="260" viewBox="0 0 1628 1628">
<defs><clipPath id="cc1280"><circle cx="792" cy="829" r="762"/></clipPath></defs>
<circle cx="792" cy="829" r="762" fill="#ef7073"/>
<path d="M1425 440 L1538 462 L1500 575 Z" fill="#ef7073"/>
<g clip-path="url(#cc1280)">
<path d="M730 1180 H862 V1330 H730 Z" fill="#f6dcc6"/>
<path d="M585 1305 Q800 1280 1015 1305 L1050 1640 L550 1640 Z" fill="#f6f4ee"/>
<path d="M590 1305 L555 1560 L560 1640 L650 1640 Z" fill="#062628"/>
<path d="M1008 1305 L1045 1560 L1040 1640 L955 1640 Z" fill="#062628"/>
<path d="M615 1310 Q800 1440 985 1310" fill="none" stroke="#062628" stroke-width="28"/>
</g>
<ellipse cx="372" cy="900" rx="30" ry="60" fill="#f6dcc6"/>
<ellipse cx="1208" cy="895" rx="30" ry="58" fill="#f6dcc6"/>
<path d="M390 760 C390 600 560 540 800 540 C1040 540 1195 600 1195 760 L1190 1000 C1150 1150 980 1215 792 1215 C600 1215 440 1150 400 1000 Z" fill="#f8e4d0"/>
<circle cx="570" cy="1010" r="82" fill="#f0aea8"/>
<circle cx="1002" cy="1002" r="82" fill="#f0aea8"/>
<path d="M360 780 C355 600 360 470 440 412 C520 400 560 330 640 260 C720 215 860 225 990 318 L1075 308 L1050 375 C1150 400 1215 470 1222 600 L1220 780 L1180 770 C1140 680 1110 600 1050 555 C930 600 860 625 800 625 C700 625 640 590 600 565 C500 610 440 680 405 770 Z" fill="#3d1f14"/>
<path d="M440 412 C520 400 560 330 640 260 C720 215 860 225 990 318 L1075 308 C1000 300 900 240 760 265 C650 290 580 370 480 415 Z" fill="#2b140c"/>
<path d="M395 940 C410 1120 580 1210 792 1212 C1000 1210 1170 1120 1190 940 L1150 1000 C1120 1060 1060 1090 1010 1095 C950 1080 880 1040 792 1030 C700 1040 630 1080 570 1095 C520 1090 450 1060 420 1000 Z" fill="#3d1f14"/>
<ellipse cx="790" cy="1110" rx="82" ry="62" fill="#f8e4d0"/>
<path d="M725 1095 Q790 1140 855 1095" fill="none" stroke="#5a1420" stroke-width="14" stroke-linecap="round"/>
<path d="M420 762 C500 745 620 735 715 742 L705 752 C620 748 520 752 440 770 Z" fill="#141414"/>
<path d="M890 742 C990 735 1100 745 1180 762 L1165 770 C1080 752 990 748 900 752 Z" fill="#141414"/>
<path d="M355 772 C560 755 700 760 790 785 C880 760 1020 755 1222 772 L1215 832 C1060 810 920 810 850 830 L735 830 C660 810 520 810 362 832 Z" fill="#141414"/>
<path d="M380 800 L752 805 L708 1010 Q700 1035 670 1038 Q560 1050 480 1035 Q455 1030 448 1005 Z" fill="none" stroke="#141414" stroke-width="28" stroke-linejoin="round"/>
<path d="M838 805 L1205 800 L1142 1018 Q1135 1040 1110 1042 Q1000 1055 905 1040 Q885 1035 880 1010 Z" fill="none" stroke="#141414" stroke-width="28" stroke-linejoin="round"/>
<ellipse cx="622" cy="866" rx="23" ry="42" fill="#0a0a0a"/>
<ellipse cx="936" cy="866" rx="23" ry="42" fill="#0a0a0a"/>
</svg>
<div class="t" style="left:1076px;top:1315px;font-size:64px;font-weight:bold;color:#fff;-webkit-text-stroke:2.2px currentColor;letter-spacing:0.6px">I’M <span style="color:#ef6b70">JOHN DOE</span></div>
<div class="t" style="left:1086px;top:1423px;font-size:36px;font-weight:bold;color:#fff;-webkit-text-stroke:1.2px currentColor;transform:scaleX(.95);transform-origin:left top;letter-spacing:-0.5px">GRAPHIC</div>
<div class="t" style="left:1078px;top:1455px;font-size:36px;font-weight:bold;color:#fff;-webkit-text-stroke:1.2px currentColor;transform:scaleX(.95);transform-origin:left top;letter-spacing:-0.5px">DESIGNER</div>
<div class="a" style="left:844px;top:1550px;width:288px;height:80px;background:#ede6ec"></div>
<div class="a" style="left:836px;top:1550px;width:8px;height:80px;border-radius:4px 4px 0 0;background:#272e3b"></div>
<div class="a" style="left:1178px;top:1550px;width:356px;height:80px;background:#ede6ec"></div>
<div class="a" style="left:1170px;top:1550px;width:8px;height:80px;border-radius:4px 4px 0 0;background:#272e3b"></div>
<svg class="a" style="left:856px;top:1585px" width="34" height="30" viewBox="0 0 34 30"><path d="M17 2 L33 15 L29 15 L29 29 L21 29 L21 21 L13 21 L13 29 L5 29 L5 15 L1 15 Z" fill="#ef7073"/></svg>
<div class="t" style="left:900px;top:1580px;font-size:19px;font-weight:normal;color:#2a2a2a;letter-spacing:-0.3px;transform:scaleX(.93);transform-origin:left top">777 seventh avenue</div>
<div class="t" style="left:900px;top:1624px;font-size:19px;font-weight:normal;color:#2a2a2a;letter-spacing:-0.3px;transform:scaleX(.93);transform-origin:left top">01 22 3456 7891</div>
<div class="t" style="left:900px;top:1602px;font-size:19px;font-weight:normal;color:#2a2a2a;letter-spacing:-0.3px;transform:scaleX(.93);transform-origin:left top">New York</div>
<div class="t" style="left:1192px;top:1560px;font-size:25px;font-weight:bold;color:#3b3b3b;transform:scaleX(.9);transform-origin:left top">EDUCATION</div>
<div class="t" style="left:1192px;top:1596px;font-size:22px;font-weight:bold;color:#5a5a5a;transform:scaleX(.92);transform-origin:left top">Master Degree</div>
<div class="t" style="left:1192px;top:1616px;font-size:13px;font-weight:normal;color:#555;">University Name</div>
<svg class="a" style="left:1850px;top:4px" width="44" height="38" viewBox="0 0 44 38">
<g fill="#fff">
<path d="M3 8.5 L12.5 2.5 L22 8.5 L12.5 14.5 Z"/><path d="M22 8.5 L31.5 2.5 L41 8.5 L31.5 14.5 Z"/>
<path d="M3 20.5 L12.5 14.5 L22 20.5 L12.5 26.5 Z"/><path d="M22 20.5 L31.5 14.5 L41 20.5 L31.5 26.5 Z"/>
<path d="M12.5 29.5 L22 23.5 L31.5 29.5 L22 35.5 Z"/></g></svg>
<svg class="a" style="left:1910px;top:8px" width="48" height="34" viewBox="0 0 48 34">
<path d="M11 29.5 C3 29.5 1 21 4.5 15.5 C7.5 10 13 9.5 16 11 C19 4 28 1.5 35 4.5 C40 7 42 12 41 17" fill="none" stroke="#fff" stroke-width="3"/>
<path d="M26 29.5 L17 20.5 C14 17.5 10 19 10 22.5 C10 26 13 29.5 17 29.5 L26 29.5" fill="none" stroke="#fff" stroke-width="3"/>
<path d="M18 17 C21 12 28 12 31 17" fill="none" stroke="#fff" stroke-width="3"/>
<circle cx="35" cy="22" r="9.5" fill="#f25a45"/></svg>
<svg class="a" style="left:1975px;top:5px" width="38" height="36" viewBox="0 0 38 36">
<path d="M19 2 C29 2 36.5 8 36.5 16 C36.5 24 29 29.5 19 29.5 C17.5 29.5 16 29.3 14.8 29 L17 35.5 L8 28 C3.5 25.5 1.5 21 1.5 16 C1.5 8 9 2 19 2 Z" fill="#8fe5c5"/>
<text x="19" y="21" text-anchor="middle" font-family="Liberation Sans" font-weight="bold" font-size="11" fill="#10231c" stroke="#10231c" stroke-width="0.4">LINE</text></svg>
<svg class="a" style="left:2031px;top:5px" width="34" height="34" viewBox="0 0 34 34">
<rect x="1" y="1" width="32" height="32" rx="2" fill="#fff"/>
<path d="M12.5 8 H21 L28.5 21 L24.5 27.5 H9.5 L5.5 21 Z" fill="#1c2439"/>
<path d="M15 11.5 L19 11.5 L25.5 22 L21.5 22 Z M12.5 13 L8.5 21.5 L10.5 24.5 L14.5 16 Z M11.5 24.5 H24 L22.5 22 H13 Z" fill="#fff"/></svg>
<svg class="a" style="left:2079px;top:6px" width="44" height="34" viewBox="0 0 44 34">
<path d="M2.5 12 A28 28 0 0 1 41.5 12" fill="none" stroke="#fff" stroke-width="3.2" stroke-linecap="round"/>
<path d="M8.5 18 A19 19 0 0 1 35.5 18" fill="none" stroke="#fff" stroke-width="3.2" stroke-linecap="round"/>
<path d="M14.5 23.5 A10 10 0 0 1 29.5 23.5" fill="none" stroke="#fff" stroke-width="3.2" stroke-linecap="round"/>
<path d="M18.5 28.5 L22 25.5 L25.5 28.5 L22 32 Z" fill="#fff"/></svg>
<div class="t" style="left:2147px;top:9px;font-size:28px;font-weight:700;color:#fff">週</div>
<svg class="a" style="left:60px;top:67px" width="40" height="36" viewBox="0 0 40 36">
<path d="M20 2 L38 19 L33 19 L33 33 L24 33 L24 24 L16 24 L16 33 L7 33 L7 19 L2 19 Z" fill="#c4c4c4"/></svg>
<div class="a" style="left:120px;top:64px;width:3px;height:40px;background:#5e5e5e"></div>
<div class="a" style="left:140px;top:70px;width:15px;height:22px;background:linear-gradient(135deg,#d6d6d6,#b2b2b2)"></div>
<div class="a" style="left:159px;top:70px;width:14px;height:10px;background:#c8c8c8"></div>
<div class="a" style="left:159px;top:82px;width:14px;height:10px;background:#b8b8b8"></div>
<div class="a" style="left:600px;top:131px;width:256px;height:44px;border-radius:5px;background:#595959"></div>
<div class="a" style="left:600px;top:132px;width:216px;height:42px;background:linear-gradient(90deg,#8c8c8c,#7c7c7c)"></div>
<svg class="a" style="left:826px;top:146px" width="20" height="14" viewBox="0 0 20 14"><path d="M3 3 L10 10 L17 3" fill="none" stroke="#777" stroke-width="2"/></svg>
<div class="a" style="left:863px;top:131px;width:213px;height:44px;border-radius:5px;background:#484848;border:1.5px solid #5f5f5f"></div>
<div class="a" style="left:866px;top:134px;width:172px;height:38px;background:#e5e5e5"></div>
<div class="a" style="left:879px;top:147px;width:12px;height:12px;border-radius:50%;background:#111"></div>
<div class="t" style="left:914px;top:140px;font-size:27px;font-weight:500;color:#111;-webkit-text-stroke:0.3px #111;letter-spacing:1px">5 pt. R...</div>
<svg class="a" style="left:1047px;top:146px" width="20" height="14" viewBox="0 0 20 14"><path d="M3 3 L10 10 L17 3" fill="none" stroke="#eee" stroke-width="2.2"/></svg>
<div class="t" style="left:1091px;top:139px;font-size:27px;font-weight:700;color:#e6e6e6">不透明度:</div>
<div class="a" style="left:1091px;top:166px;width:112px;height:0;border-top:2px dotted #cfcfcf"></div>
<div class="a" style="left:1214px;top:132px;width:167px;height:42px;border-radius:6px;background:#434343;border:1.5px solid #5c5c5c"></div>
<div class="a" style="left:1344px;top:133px;width:2px;height:40px;background:#555"></div>
<div class="t" style="left:1225px;top:139px;font-size:27px;font-weight:500;color:#ececec;-webkit-text-stroke:0.8px #ececec;letter-spacing:0.5px">100%</div>
<svg class="a" style="left:1354px;top:144px" width="14" height="20" viewBox="0 0 14 20"><path d="M4 3 L10 10 L4 17" fill="none" stroke="#eee" stroke-width="2.2"/></svg>
<div class="t" style="left:1393px;top:139px;font-size:27px;font-weight:700;color:#c6c6c6">樣式:</div>
<div class="a" style="left:1463px;top:132px;width:79px;height:42px;border-radius:6px;background:#484848;border:1.5px solid #5c5c5c"></div>
<div class="a" style="left:1466px;top:134px;width:38px;height:38px;background:#e4e4e4"></div>
<svg class="a" style="left:1512px;top:146px" width="20" height="14" viewBox="0 0 20 14"><path d="M3 3 L10 10 L17 3" fill="none" stroke="#eee" stroke-width="2.2"/></svg>
<div class="a" style="left:1553px;top:130px;width:3px;height:46px;background:#484848"></div>
<div class="a" style="left:1566px;top:133px;width:175px;height:41px;border-radius:5px;border:2px solid #6e6e6e"></div>
<div class="t" style="left:1603px;top:139px;font-size:27px;font-weight:700;color:#f2f2f2">文件設定</div>
<div class="a" style="left:1752px;top:133px;width:175px;height:41px;border-radius:5px;border:2px solid #6e6e6e"></div>
<div class="t" style="left:1789px;top:139px;font-size:27px;font-weight:700;color:#f2f2f2">偏好設定</div>
<svg class="a" style="left:1946px;top:134px" width="36" height="36" viewBox="0 0 36 36">
<rect x="3" y="12" width="8" height="10" fill="none" stroke="#bdbdbd" stroke-width="2"/>
<rect x="20" y="3" width="10" height="8" fill="none" stroke="#bdbdbd" stroke-width="2"/>
<path d="M14 10 L26 24 L19 24 L15 33 Z" fill="#c8c8c8"/></svg>
<svg class="a" style="left:1990px;top:144px" width="20" height="14" viewBox="0 0 20 14"><path d="M3 3 L10 10 L17 3" fill="none" stroke="#ddd" stroke-width="2.2"/></svg>
<svg class="a" style="left:72px;top:208px" width="16" height="16" viewBox="0 0 16 16"><path d="M2 2 L14 14 M14 2 L2 14" stroke="#e0e0e0" stroke-width="2.2"/></svg>
<div class="t" style="left:106px;top:205px;font-size:24px;font-weight:bold;color:#dedede">cv7 [轉</div>
<svg class="a" style="left:0;top:255px" width="30" height="38" viewBox="0 0 30 38"><path d="M1 2 L26 27 L14 27 L1 37 Z" fill="#c3c3c3"/></svg>
<svg class="a" style="left:31px;top:285px" width="8" height="8" viewBox="0 0 8 8"><path d="M8 0 L8 8 L0 8 Z" fill="#c3c3c3"/></svg>
<svg class="a" style="left:0;top:302px" width="36" height="40" viewBox="0 0 36 40">
<path d="M2 14 C2 4 24 2 26 10" fill="none" stroke="#c3c3c3" stroke-width="2"/>
<path d="M4 18 C0 24 8 28 8 22 C8 18 2 20 6 28" fill="none" stroke="#c3c3c3" stroke-width="2"/>
<path d="M14 6 L32 26 L22 26 L13 38 Z" fill="#c3c3c3"/></svg>
<svg class="a" style="left:0;top:348px" width="34" height="40" viewBox="0 0 34 40">
<path d="M20 4 L31 15 L25 21 L14 10 Z" fill="#c3c3c3"/><path d="M12 12 L23 23 L15 33 L1 37 L5 23 Z" fill="#c3c3c3"/>
<path d="M3 35 L10 28" stroke="#535353" stroke-width="2"/><circle cx="11" cy="27" r="2.2" fill="#535353"/></svg>
<svg class="a" style="left:0;top:400px" width="40" height="36" viewBox="0 0 40 36"><path d="M0 32 L27 4" stroke="#c3c3c3" stroke-width="2.4"/></svg>
<svg class="a" style="left:31px;top:426px" width="8" height="8" viewBox="0 0 8 8"><path d="M8 0 L8 8 L0 8 Z" fill="#c3c3c3"/></svg>
<svg class="a" style="left:0;top:448px" width="34" height="40" viewBox="0 0 34 40">
<path d="M28 2 C32 4 22 18 14 26 L9 22 C16 12 24 0 28 2 Z" fill="#c3c3c3"/><path d="M8 24 L12 28 C10 34 4 35 0 34 C3 32 2 26 8 24 Z" fill="#c3c3c3"/></svg>
<svg class="a" style="left:31px;top:474px" width="8" height="8" viewBox="0 0 8 8"><path d="M8 0 L8 8 L0 8 Z" fill="#c3c3c3"/></svg>
<svg class="a" style="left:0;top:496px" width="34" height="40" viewBox="0 0 34 40">
<path d="M16 3 L30 17 L17 30 L3 16 Z" fill="#c3c3c3"/><path d="M3 20 L12 29 L7 34 L0 34 L0 22 Z" fill="none" stroke="#c3c3c3" stroke-width="2"/></svg>
<svg class="a" style="left:31px;top:522px" width="8" height="8" viewBox="0 0 8 8"><path d="M8 0 L8 8 L0 8 Z" fill="#c3c3c3"/></svg>
<svg class="a" style="left:0;top:544px" width="34" height="40" viewBox="0 0 34 40">
<rect x="3" y="4" width="27" height="22" fill="none" stroke="#c3c3c3" stroke-width="2"/><rect x="1" y="15" width="13" height="17" fill="none" stroke="#c3c3c3" stroke-width="2"/>
<path d="M14 16 L24 8 M18 8 H24 V14" fill="none" stroke="#c3c3c3" stroke-width="2"/></svg>
<svg class="a" style="left:31px;top:572px" width="8" height="8" viewBox="0 0 8 8"><path d="M8 0 L8 8 L0 8 Z" fill="#c3c3c3"/></svg>
<svg class="a" style="left:0;top:594px" width="34" height="40" viewBox="0 0 34 40">
<rect x="5" y="5" width="26" height="24" fill="none" stroke="#c3c3c3" stroke-width="2"/>
<rect x="2" y="2" width="6" height="6" fill="#c3c3c3"/><rect x="28" y="2" width="6" height="6" fill="#c3c3c3"/><rect x="28" y="26" width="6" height="6" fill="#c3c3c3"/><rect x="2" y="26" width="6" height="6" fill="#c3c3c3"/>
<path d="M0 12 L10 20 L2 22 Z" fill="#c3c3c3"/></svg>
<svg class="a" style="left:31px;top:624px" width="8" height="8" viewBox="0 0 8 8"><path d="M8 0 L8 8 L0 8 Z" fill="#c3c3c3"/></svg>
<svg class="a" style="left:0;top:640px" width="34" height="40" viewBox="0 0 34 40">
<path d="M0 6 C8 8 14 14 16 22 M0 14 C6 16 10 20 12 26 M3 4 L3 30 M8 6 L8 28" fill="none" stroke="#c3c3c3" stroke-width="1.8"/>
<path d="M0 20 H18 M0 26 H24 M0 32 H30" stroke="#c3c3c3" stroke-width="1.8"/></svg>
<svg class="a" style="left:31px;top:672px" width="8" height="8" viewBox="0 0 8 8"><path d="M8 0 L8 8 L0 8 Z" fill="#c3c3c3"/></svg>
<div class="a" style="left:0;top:693px;width:28px;height:28px;background:linear-gradient(90deg,#2a2a2a,#d0d0d0);border:1px solid #888"></div>
<svg class="a" style="left:0;top:736px" width="34" height="40" viewBox="0 0 34 40">
<rect x="0" y="3" width="12" height="12" fill="#c3c3c3"/><circle cx="14" cy="17" r="8" fill="#8a8a8a" stroke="#c3c3c3" stroke-width="2"/><circle cx="22" cy="25" r="7" fill="#535353" stroke="#c3c3c3" stroke-width="2"/></svg>
<svg class="a" style="left:0;top:784px" width="40" height="40" viewBox="0 0 40 40">
<rect x="1" y="18" width="5" height="17" fill="#c3c3c3"/><rect x="8" y="10" width="5" height="25" fill="#c3c3c3"/><rect x="15" y="4" width="5" height="31" fill="#c3c3c3"/><rect x="22" y="12" width="5" height="23" fill="#c3c3c3"/>
<path d="M0 35 H30" stroke="#c3c3c3" stroke-width="2"/></svg>
<svg class="a" style="left:31px;top:816px" width="8" height="8" viewBox="0 0 8 8"><path d="M8 0 L8 8 L0 8 Z" fill="#c3c3c3"/></svg>
<svg class="a" style="left:0;top:832px" width="34" height="40" viewBox="0 0 34 40">
<path d="M22 3 L30 11 L24 17 L16 9 Z" fill="#c3c3c3"/><path d="M17 11 L22 16 L6 32 L1 34 L0 31 Z" fill="none" stroke="#c3c3c3" stroke-width="2"/></svg>
<svg class="a" style="left:31px;top:864px" width="8" height="8" viewBox="0 0 8 8"><path d="M8 0 L8 8 L0 8 Z" fill="#c3c3c3"/></svg>
<svg class="a" style="left:0;top:880px" width="34" height="40" viewBox="0 0 34 40">
<circle cx="12" cy="14" r="10" fill="none" stroke="#c3c3c3" stroke-width="2.4"/><path d="M19 21 L28 30" stroke="#c3c3c3" stroke-width="4" stroke-linecap="round"/></svg>
<div class="a" style="left:0;top:926px;width:42px;height:2px;background:#4a4a4a"></div>
<svg class="a" style="left:10px;top:934px" width="30" height="30" viewBox="0 0 30 30">
<path d="M4 8 L10 2 L10 6 C16 6 20 10 20 16 L23 16 L19 22 L15 16 L17 16 C17 12 14 9 10 9 L10 12 Z" fill="#c3c3c3"/></svg>
<div class="a" style="left:-2px;top:973px;width:32px;height:70px;background:#fff;border:2px solid #333"></div>
<div class="a" style="left:-2px;top:995px;width:12px;height:30px;background:#535353;border:2px solid #222"></div>
<svg class="a" style="left:0;top:973px" width="30" height="40" viewBox="0 0 30 40"><path d="M0 26 L28 2" stroke="#e8131b" stroke-width="2.6"/></svg>
<div class="a" style="left:0;top:1058px;width:40px;height:38px;border-radius:4px;border:1.5px solid #4d4d4d"></div>
<div class="a" style="left:8px;top:1063px;width:26px;height:27px;background:#fff;border:2px solid #111"></div>
<svg class="a" style="left:8px;top:1063px" width="26" height="27" viewBox="0 0 26 27"><path d="M2 25 L24 2" stroke="#e8131b" stroke-width="2.6"/></svg>
<div class="a" style="left:0;top:1106px;width:40px;height:38px;border-radius:4px;border:1.5px solid #4d4d4d"></div>
<svg class="a" style="left:10px;top:1116px" width="20" height="20" viewBox="0 0 20 20"><circle cx="10" cy="10" r="7" fill="none" stroke="#6a6a6a" stroke-width="2"/><path d="M10 10 V3 A7 7 0 0 1 17 10 Z" fill="#6a6a6a"/></svg>
<div class="a" style="left:-2px;top:1160px;width:6px;height:22px;border:2px solid #9a9a9a"></div>
<div class="a" style="left:169px;top:44px;width:476px;height:1035px;background:#45474b;border:1px solid #0a0a0a;border-top:none;border-radius:0 0 10px 10px;overflow:hidden;box-shadow:0 10px 30px rgba(0,0,0,.35)">
<div class="a" style="left:0;top:0;width:100%;height:100%;border:1px solid rgba(255,255,255,.16);border-top:none;border-radius:0 0 9px 9px;z-index:5"></div>
<div class="a" style="left:240px;top:230px;width:250px;height:820px;-webkit-mask-image:linear-gradient(to bottom,transparent 0,#000 200px);background:linear-gradient(90deg,rgba(125,118,65,0) 0,rgba(125,118,65,.35) 100px,rgba(125,118,65,.85) 180px,#7b7441 250px)"></div>
<div class="t s" style="left:43px;top:12px;font-size:28px;font-weight:500;color:#ffffff">新增...</div>
<svg class="a" style="left:405.6px;top:14px" width="23" height="23" viewBox="0 0 23 23"><path d="M8.1 4.8 V18.2 M14.9 4.8 V18.2 M4.8 8.1 H18.2 M4.8 14.9 H18.2 M8.1 4.8 A3.3 3.3 0 1 0 4.8 8.1 M14.9 4.8 A3.3 3.3 0 1 1 18.2 8.1 M8.1 18.2 A3.3 3.3 0 1 1 4.8 14.9 M14.9 18.2 A3.3 3.3 0 1 0 18.2 14.9" fill="none" stroke="#ffffff" stroke-width="2.7"/></svg><div class="t" style="left:430.1px;top:11px;font-size:30px;color:#ffffff;-webkit-text-stroke:0.7px #ffffff">N</div>
<div class="t s" style="left:43px;top:50px;font-size:28px;font-weight:500;color:#ffffff">從範本新增...</div>
<svg class="a" style="left:405.6px;top:52px" width="23" height="23" viewBox="0 0 23 23"><path d="M8.1 4.8 V18.2 M14.9 4.8 V18.2 M4.8 8.1 H18.2 M4.8 14.9 H18.2 M8.1 4.8 A3.3 3.3 0 1 0 4.8 8.1 M14.9 4.8 A3.3 3.3 0 1 1 18.2 8.1 M8.1 18.2 A3.3 3.3 0 1 1 4.8 14.9 M14.9 18.2 A3.3 3.3 0 1 0 18.2 14.9" fill="none" stroke="#ffffff" stroke-width="2.7"/></svg><svg class="a" style="left:377.0px;top:51px" width="24" height="23" viewBox="0 0 24 23"><path d="M12 2 L22.3 12.3 H16.8 V21.6 H7.2 V12.3 H1.7 Z" fill="none" stroke="#ffffff" stroke-width="2.6" stroke-linejoin="miter"/></svg><div class="t" style="left:430.1px;top:49px;font-size:30px;color:#ffffff;-webkit-text-stroke:0.7px #ffffff">N</div>
<div class="t s" style="left:43px;top:88px;font-size:28px;font-weight:500;color:#ffffff">開啟舊檔...</div>
<svg class="a" style="left:405.6px;top:90px" width="23" height="23" viewBox="0 0 23 23"><path d="M8.1 4.8 V18.2 M14.9 4.8 V18.2 M4.8 8.1 H18.2 M4.8 14.9 H18.2 M8.1 4.8 A3.3 3.3 0 1 0 4.8 8.1 M14.9 4.8 A3.3 3.3 0 1 1 18.2 8.1 M8.1 18.2 A3.3 3.3 0 1 1 4.8 14.9 M14.9 18.2 A3.3 3.3 0 1 0 18.2 14.9" fill="none" stroke="#ffffff" stroke-width="2.7"/></svg><div class="t" style="left:430.1px;top:87px;font-size:30px;color:#ffffff;-webkit-text-stroke:0.7px #ffffff">O</div>
<div class="t s" style="left:43px;top:126px;font-size:28px;font-weight:500;color:#ffffff">打開最近使用過的檔案</div>
<svg class="a" style="left:426.5px;top:131px" width="19" height="21" viewBox="0 0 19 21"><path d="M0.5 0.5 L18.2 10.2 L0.5 20.3 Z" fill="#ffffff"/></svg>
<div class="t s" style="left:43px;top:164px;font-size:28px;font-weight:500;color:#8c8e92">在 <span class=L>Bridge</span> 中瀏覽...</div>
<svg class="a" style="left:405.6px;top:166px" width="23" height="23" viewBox="0 0 23 23"><path d="M8.1 4.8 V18.2 M14.9 4.8 V18.2 M4.8 8.1 H18.2 M4.8 14.9 H18.2 M8.1 4.8 A3.3 3.3 0 1 0 4.8 8.1 M14.9 4.8 A3.3 3.3 0 1 1 18.2 8.1 M8.1 18.2 A3.3 3.3 0 1 1 4.8 14.9 M14.9 18.2 A3.3 3.3 0 1 0 18.2 14.9" fill="none" stroke="#8c8e92" stroke-width="2.7"/></svg><svg class="a" style="left:374.6px;top:166px" width="25" height="23" viewBox="0 0 25 23"><path d="M0 2.5 H9 L15.8 20.3 H24.5 M14.8 2.5 H24.5" fill="none" stroke="#8c8e92" stroke-width="3"/></svg><div class="t" style="left:430.1px;top:163px;font-size:30px;color:#8c8e92;-webkit-text-stroke:0.7px #8c8e92">O</div>
<div class="a" style="left:1px;top:208px;width:473px;height:4px;background:rgba(255,255,255,.2)"></div>
<div class="t s" style="left:43px;top:226px;font-size:28px;font-weight:500;color:#ffffff">關閉檔案</div>
<svg class="a" style="left:405.6px;top:228px" width="23" height="23" viewBox="0 0 23 23"><path d="M8.1 4.8 V18.2 M14.9 4.8 V18.2 M4.8 8.1 H18.2 M4.8 14.9 H18.2 M8.1 4.8 A3.3 3.3 0 1 0 4.8 8.1 M14.9 4.8 A3.3 3.3 0 1 1 18.2 8.1 M8.1 18.2 A3.3 3.3 0 1 1 4.8 14.9 M14.9 18.2 A3.3 3.3 0 1 0 18.2 14.9" fill="none" stroke="#ffffff" stroke-width="2.7"/></svg><div class="t" style="left:430.1px;top:225px;font-size:30px;color:#ffffff;-webkit-text-stroke:0.7px #ffffff">W</div>
<div class="t s" style="left:43px;top:264px;font-size:28px;font-weight:500;color:#8c8e92">儲存</div>
<svg class="a" style="left:405.6px;top:266px" width="23" height="23" viewBox="0 0 23 23"><path d="M8.1 4.8 V18.2 M14.9 4.8 V18.2 M4.8 8.1 H18.2 M4.8 14.9 H18.2 M8.1 4.8 A3.3 3.3 0 1 0 4.8 8.1 M14.9 4.8 A3.3 3.3 0 1 1 18.2 8.1 M8.1 18.2 A3.3 3.3 0 1 1 4.8 14.9 M14.9 18.2 A3.3 3.3 0 1 0 18.2 14.9" fill="none" stroke="#8c8e92" stroke-width="2.7"/></svg><div class="t" style="left:430.1px;top:263px;font-size:30px;color:#8c8e92;-webkit-text-stroke:0.7px #8c8e92">S</div>
<div class="t s" style="left:43px;top:302px;font-size:28px;font-weight:500;color:#ffffff">另存新檔...</div>
<svg class="a" style="left:405.6px;top:304px" width="23" height="23" viewBox="0 0 23 23"><path d="M8.1 4.8 V18.2 M14.9 4.8 V18.2 M4.8 8.1 H18.2 M4.8 14.9 H18.2 M8.1 4.8 A3.3 3.3 0 1 0 4.8 8.1 M14.9 4.8 A3.3 3.3 0 1 1 18.2 8.1 M8.1 18.2 A3.3 3.3 0 1 1 4.8 14.9 M14.9 18.2 A3.3 3.3 0 1 0 18.2 14.9" fill="none" stroke="#ffffff" stroke-width="2.7"/></svg><svg class="a" style="left:377.0px;top:303px" width="24" height="23" viewBox="0 0 24 23"><path d="M12 2 L22.3 12.3 H16.8 V21.6 H7.2 V12.3 H1.7 Z" fill="none" stroke="#ffffff" stroke-width="2.6" stroke-linejoin="miter"/></svg><div class="t" style="left:430.1px;top:301px;font-size:30px;color:#ffffff;-webkit-text-stroke:0.7px #ffffff">S</div>
<div class="t s" style="left:43px;top:340px;font-size:28px;font-weight:500;color:#ffffff">儲存拷貝...</div>
<svg class="a" style="left:405.6px;top:342px" width="23" height="23" viewBox="0 0 23 23"><path d="M8.1 4.8 V18.2 M14.9 4.8 V18.2 M4.8 8.1 H18.2 M4.8 14.9 H18.2 M8.1 4.8 A3.3 3.3 0 1 0 4.8 8.1 M14.9 4.8 A3.3 3.3 0 1 1 18.2 8.1 M8.1 18.2 A3.3 3.3 0 1 1 4.8 14.9 M14.9 18.2 A3.3 3.3 0 1 0 18.2 14.9" fill="none" stroke="#ffffff" stroke-width="2.7"/></svg><svg class="a" style="left:374.6px;top:342px" width="25" height="23" viewBox="0 0 25 23"><path d="M0 2.5 H9 L15.8 20.3 H24.5 M14.8 2.5 H24.5" fill="none" stroke="#ffffff" stroke-width="3"/></svg><div class="t" style="left:430.1px;top:339px;font-size:30px;color:#ffffff;-webkit-text-stroke:0.7px #ffffff">S</div>
<div class="t s" style="left:43px;top:378px;font-size:28px;font-weight:500;color:#ffffff">另存範本...</div>
<div class="t s" style="left:43px;top:416px;font-size:28px;font-weight:500;color:#8c8e92">儲存選取的切片...</div>
<div class="t s" style="left:43px;top:454px;font-size:28px;font-weight:500;color:#ffffff">版本記錄</div>
<div class="t s" style="left:43px;top:492px;font-size:28px;font-weight:500;color:#8c8e92">回復</div>
<div class="t" style="left:431px;top:501px;font-size:20px;font-weight:500;color:#8c8e92">F12</div>
<div class="a" style="left:1px;top:536px;width:473px;height:4px;background:rgba(255,255,255,.2)"></div>
<div class="t s" style="left:43px;top:554px;font-size:28px;font-weight:500;color:#ffffff">搜尋 <span class=L>Adobe Stock</span>...</div>
<div class="t s" style="left:43px;top:592px;font-size:28px;font-weight:500;color:#ffffff">置入...</div>
<svg class="a" style="left:405.6px;top:594px" width="23" height="23" viewBox="0 0 23 23"><path d="M8.1 4.8 V18.2 M14.9 4.8 V18.2 M4.8 8.1 H18.2 M4.8 14.9 H18.2 M8.1 4.8 A3.3 3.3 0 1 0 4.8 8.1 M14.9 4.8 A3.3 3.3 0 1 1 18.2 8.1 M8.1 18.2 A3.3 3.3 0 1 1 4.8 14.9 M14.9 18.2 A3.3 3.3 0 1 0 18.2 14.9" fill="none" stroke="#ffffff" stroke-width="2.7"/></svg><svg class="a" style="left:377.0px;top:593px" width="24" height="23" viewBox="0 0 24 23"><path d="M12 2 L22.3 12.3 H16.8 V21.6 H7.2 V12.3 H1.7 Z" fill="none" stroke="#ffffff" stroke-width="2.6" stroke-linejoin="miter"/></svg><div class="t" style="left:430.1px;top:591px;font-size:30px;color:#ffffff;-webkit-text-stroke:0.7px #ffffff">P</div>
<div class="a" style="left:1px;top:636px;width:473px;height:4px;background:rgba(255,255,255,.2)"></div>
<div class="a" style="left:1px;top:650px;width:473px;height:38px;background:linear-gradient(90deg,#1b6be0,#2f80ee)"></div>
<div class="t s" style="left:43px;top:654px;font-size:28px;font-weight:500;color:#ffffff">轉存</div>
<svg class="a" style="left:426.5px;top:659px" width="19" height="21" viewBox="0 0 19 21"><path d="M0.5 0.5 L18.2 10.2 L0.5 20.3 Z" fill="#ffffff"/></svg>
<div class="t s" style="left:43px;top:692px;font-size:28px;font-weight:500;color:#8c8e92">轉存選取範圍...</div>
<div class="a" style="left:1px;top:736px;width:473px;height:4px;background:rgba(255,255,255,.2)"></div>
<div class="t s" style="left:43px;top:754px;font-size:28px;font-weight:500;color:#ffffff">封裝...</div>
<svg class="a" style="left:405.6px;top:756px" width="23" height="23" viewBox="0 0 23 23"><path d="M8.1 4.8 V18.2 M14.9 4.8 V18.2 M4.8 8.1 H18.2 M4.8 14.9 H18.2 M8.1 4.8 A3.3 3.3 0 1 0 4.8 8.1 M14.9 4.8 A3.3 3.3 0 1 1 18.2 8.1 M8.1 18.2 A3.3 3.3 0 1 1 4.8 14.9 M14.9 18.2 A3.3 3.3 0 1 0 18.2 14.9" fill="none" stroke="#ffffff" stroke-width="2.7"/></svg><svg class="a" style="left:377.0px;top:755px" width="24" height="23" viewBox="0 0 24 23"><path d="M12 2 L22.3 12.3 H16.8 V21.6 H7.2 V12.3 H1.7 Z" fill="none" stroke="#ffffff" stroke-width="2.6" stroke-linejoin="miter"/></svg><svg class="a" style="left:346.8px;top:756px" width="25" height="23" viewBox="0 0 25 23"><path d="M0 2.5 H9 L15.8 20.3 H24.5 M14.8 2.5 H24.5" fill="none" stroke="#ffffff" stroke-width="3"/></svg><div class="t" style="left:430.1px;top:753px;font-size:30px;color:#ffffff;-webkit-text-stroke:0.7px #ffffff">P</div>
<div class="t s" style="left:43px;top:792px;font-size:28px;font-weight:500;color:#ffffff">指令檔</div>
<svg class="a" style="left:426.5px;top:797px" width="19" height="21" viewBox="0 0 19 21"><path d="M0.5 0.5 L18.2 10.2 L0.5 20.3 Z" fill="#ffffff"/></svg>
<div class="a" style="left:1px;top:836px;width:473px;height:4px;background:rgba(255,255,255,.2)"></div>
<div class="t s" style="left:43px;top:854px;font-size:28px;font-weight:500;color:#ffffff">文件設定...</div>
<svg class="a" style="left:405.6px;top:856px" width="23" height="23" viewBox="0 0 23 23"><path d="M8.1 4.8 V18.2 M14.9 4.8 V18.2 M4.8 8.1 H18.2 M4.8 14.9 H18.2 M8.1 4.8 A3.3 3.3 0 1 0 4.8 8.1 M14.9 4.8 A3.3 3.3 0 1 1 18.2 8.1 M8.1 18.2 A3.3 3.3 0 1 1 4.8 14.9 M14.9 18.2 A3.3 3.3 0 1 0 18.2 14.9" fill="none" stroke="#ffffff" stroke-width="2.7"/></svg><svg class="a" style="left:374.6px;top:856px" width="25" height="23" viewBox="0 0 25 23"><path d="M0 2.5 H9 L15.8 20.3 H24.5 M14.8 2.5 H24.5" fill="none" stroke="#ffffff" stroke-width="3"/></svg><div class="t" style="left:430.1px;top:853px;font-size:30px;color:#ffffff;-webkit-text-stroke:0.7px #ffffff">P</div>
<div class="t s" style="left:43px;top:892px;font-size:28px;font-weight:500;color:#ffffff">文件色彩模式</div>
<svg class="a" style="left:426.5px;top:897px" width="19" height="21" viewBox="0 0 19 21"><path d="M0.5 0.5 L18.2 10.2 L0.5 20.3 Z" fill="#ffffff"/></svg>
<div class="t s" style="left:43px;top:930px;font-size:28px;font-weight:500;color:#ffffff">檔案資訊...</div>
<svg class="a" style="left:405.6px;top:932px" width="23" height="23" viewBox="0 0 23 23"><path d="M8.1 4.8 V18.2 M14.9 4.8 V18.2 M4.8 8.1 H18.2 M4.8 14.9 H18.2 M8.1 4.8 A3.3 3.3 0 1 0 4.8 8.1 M14.9 4.8 A3.3 3.3 0 1 1 18.2 8.1 M8.1 18.2 A3.3 3.3 0 1 1 4.8 14.9 M14.9 18.2 A3.3 3.3 0 1 0 18.2 14.9" fill="none" stroke="#ffffff" stroke-width="2.7"/></svg><svg class="a" style="left:377.0px;top:931px" width="24" height="23" viewBox="0 0 24 23"><path d="M12 2 L22.3 12.3 H16.8 V21.6 H7.2 V12.3 H1.7 Z" fill="none" stroke="#ffffff" stroke-width="2.6" stroke-linejoin="miter"/></svg><svg class="a" style="left:346.8px;top:932px" width="25" height="23" viewBox="0 0 25 23"><path d="M0 2.5 H9 L15.8 20.3 H24.5 M14.8 2.5 H24.5" fill="none" stroke="#ffffff" stroke-width="3"/></svg><div class="t" style="left:430.1px;top:929px;font-size:30px;color:#ffffff;-webkit-text-stroke:0.7px #ffffff">I</div>
<div class="a" style="left:1px;top:974px;width:473px;height:4px;background:rgba(255,255,255,.2)"></div>
<div class="t s" style="left:43px;top:992px;font-size:28px;font-weight:500;color:#ffffff">列印...</div>
<svg class="a" style="left:405.6px;top:994px" width="23" height="23" viewBox="0 0 23 23"><path d="M8.1 4.8 V18.2 M14.9 4.8 V18.2 M4.8 8.1 H18.2 M4.8 14.9 H18.2 M8.1 4.8 A3.3 3.3 0 1 0 4.8 8.1 M14.9 4.8 A3.3 3.3 0 1 1 18.2 8.1 M8.1 18.2 A3.3 3.3 0 1 1 4.8 14.9 M14.9 18.2 A3.3 3.3 0 1 0 18.2 14.9" fill="none" stroke="#ffffff" stroke-width="2.7"/></svg><div class="t" style="left:430.1px;top:991px;font-size:30px;color:#ffffff;-webkit-text-stroke:0.7px #ffffff">P</div>
</div>
<div class="a" style="left:644px;top:685px;width:486px;height:131px;border-radius:10px;border:1px solid #111;overflow:hidden;background:linear-gradient(90deg,#786d36 0px,#706536 70px,#5c4a38 160px,#4d3837 240px,#483539 340px,#433b3f 486px);box-shadow:0 8px 24px rgba(0,0,0,.35)">
<div class="a" style="left:0;top:0;width:100%;height:100%;border-radius:9px;border:1px solid rgba(255,255,255,.18)"></div>
<div class="t s" style="left:42px;top:12px;font-size:28px;font-weight:500;color:#fff">轉存為螢幕適用...</div>
<svg class="a" style="left:422px;top:15px" width="23" height="23" viewBox="0 0 23 23"><path d="M8.1 4.8 V18.2 M14.9 4.8 V18.2 M4.8 8.1 H18.2 M4.8 14.9 H18.2 M8.1 4.8 A3.3 3.3 0 1 0 4.8 8.1 M14.9 4.8 A3.3 3.3 0 1 1 18.2 8.1 M8.1 18.2 A3.3 3.3 0 1 1 4.8 14.9 M14.9 18.2 A3.3 3.3 0 1 0 18.2 14.9" fill="none" stroke="#fff" stroke-width="2.7"/></svg><svg class="a" style="left:391px;top:15px" width="25" height="23" viewBox="0 0 25 23"><path d="M0 2.5 H9 L15.8 20.3 H24.5 M14.8 2.5 H24.5" fill="none" stroke="#fff" stroke-width="3"/></svg><div class="t" style="left:446.5px;top:12px;font-size:30px;color:#fff;-webkit-text-stroke:0.7px #fff">E</div>
<div class="t s" style="left:42px;top:50px;font-size:28px;font-weight:500;color:#fff">轉存為...</div>
<div class="a" style="left:0;top:85px;width:486px;height:38px;background:linear-gradient(90deg,#3a8ef5,#2277e6 35%,#1b6ddf)"></div>
<div class="t s" style="left:42px;top:88px;font-size:28px;font-weight:500;color:#fff">儲存為網頁用 (舊版)...</div>
<svg class="a" style="left:422px;top:91px" width="23" height="23" viewBox="0 0 23 23"><path d="M8.1 4.8 V18.2 M14.9 4.8 V18.2 M4.8 8.1 H18.2 M4.8 14.9 H18.2 M8.1 4.8 A3.3 3.3 0 1 0 4.8 8.1 M14.9 4.8 A3.3 3.3 0 1 1 18.2 8.1 M8.1 18.2 A3.3 3.3 0 1 1 4.8 14.9 M14.9 18.2 A3.3 3.3 0 1 0 18.2 14.9" fill="none" stroke="#fff" stroke-width="2.7"/></svg><svg class="a" style="left:393.4px;top:90px" width="24" height="23" viewBox="0 0 24 23"><path d="M12 2 L22.3 12.3 H16.8 V21.6 H7.2 V12.3 H1.7 Z" fill="none" stroke="#fff" stroke-width="2.6" stroke-linejoin="miter"/></svg><svg class="a" style="left:363.2px;top:91px" width="25" height="23" viewBox="0 0 25 23"><path d="M0 2.5 H9 L15.8 20.3 H24.5 M14.8 2.5 H24.5" fill="none" stroke="#fff" stroke-width="3"/></svg><div class="t" style="left:446.5px;top:88px;font-size:30px;color:#fff;-webkit-text-stroke:0.7px #fff">S</div>
</div>
</body></html>
